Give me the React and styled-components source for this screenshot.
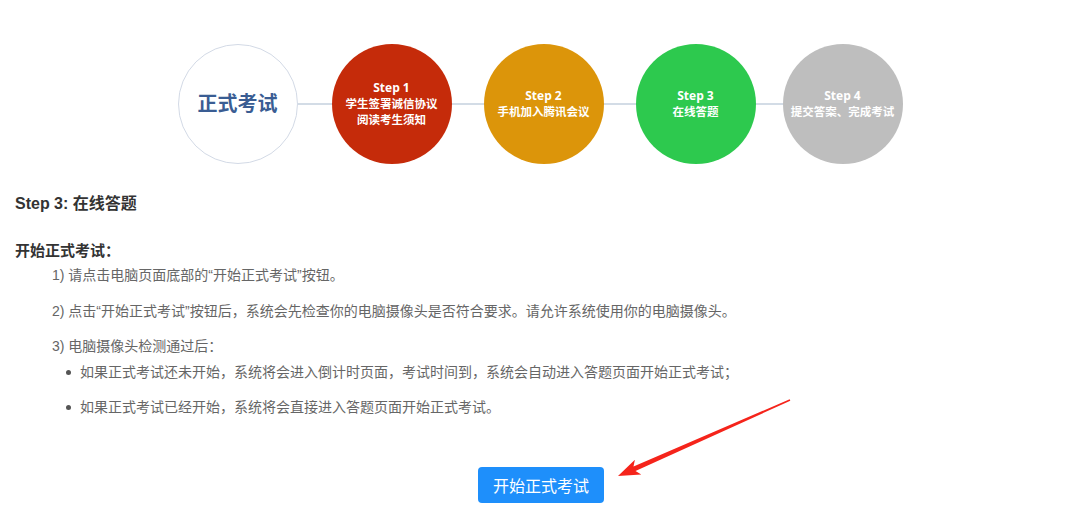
import React from 'react';
import styled, { createGlobalStyle } from 'styled-components';

const GlobalStyle = createGlobalStyle`
  html, body {
    margin: 0;
    padding: 0;
    background: #fff;
  }
  body {
    font-family: "Liberation Sans", "Noto Sans CJK SC", sans-serif;
    color: #333;
  }
`;

const Page = styled.div`
  position: relative;
  width: 1080px;
  height: 526px;
  overflow: hidden;
  padding: 44px 15px 0;
  box-sizing: border-box;
`;

const Steps = styled.div`
  display: flex;
  align-items: center;
  justify-content: center;
`;

const Circle = styled.div`
  width: 120px;
  height: 120px;
  border-radius: 50%;
  box-sizing: border-box;
  flex-shrink: 0;
  display: flex;
  flex-direction: column;
  align-items: center;
  justify-content: center;
  background: ${({ color }) => color || '#fff'};
  border: ${({ outline }) => (outline ? '1.5px solid #d3dae6' : 'none')};
  color: #fff;
  font-weight: bold;
  line-height: 16px;
  text-align: center;
`;

const StartLabel = styled.span`
  font-size: 20px;
  color: #3a5d93;
  font-weight: bold;
`;

const StepTitle = styled.span`
  font-family: "Open Sans", "Noto Sans CJK SC", sans-serif;
  font-size: 12px;
`;

const StepName = styled.span`
  font-size: 11.5px;
`;

const Connector = styled.div`
  width: ${({ w }) => w || 32}px;
  height: 2px;
  background: #d3dce6;
  flex-shrink: 0;
`;

const Heading = styled.h2`
  margin: 29px 0 0;
  font-size: 16px;
  line-height: 22px;
  font-weight: bold;
  color: #333;
`;

const SubHeading = styled.h3`
  margin: 25px 0 0;
  font-size: 15px;
  line-height: 22px;
  font-weight: bold;
  color: #333;
`;

const Item = styled.p`
  margin: ${({ gap }) => gap}px 0 0 37px;
  font-size: 14px;
  line-height: 22px;
  color: #666;
`;

const Bullets = styled.ul`
  margin: 4px 0 0 51px;
  padding: 0;
  list-style: none;
`;

const Bullet = styled.li`
  margin-top: ${({ gap }) => gap}px;
  font-size: 14px;
  line-height: 22px;
  color: #666;
  display: flex;
  align-items: center;
  gap: 9px;

  &::before {
    content: '';
    width: 5px;
    height: 5px;
    border-radius: 50%;
    background: #555;
    flex-shrink: 0;
  }
`;

const ButtonRow = styled.div`
  display: flex;
  justify-content: center;
  margin-top: 49px;
  padding-left: 2px;
`;

const StartButton = styled.button`
  height: 36px;
  padding: 0 15px;
  border: none;
  border-radius: 4px;
  background: #1e8ffb;
  color: #fff;
  font-family: "Liberation Sans", "Noto Sans CJK SC", sans-serif;
  font-size: 16px;
  cursor: pointer;
`;

const Overlay = styled.svg`
  position: absolute;
  left: 0;
  top: 0;
  pointer-events: none;
`;

const steps = [
  { color: '#c52b0a', title: 'Step 1', lines: ['学生签署诚信协议', '阅读考生须知'], gap: 34 },
  { color: '#dc950a', title: 'Step 2', lines: ['手机加入腾讯会议'], gap: 32 },
  { color: '#2dc94e', title: 'Step 3', lines: ['在线答题'], gap: 32 },
  { color: '#bebebe', title: 'Step 4', lines: ['提交答案、完成考试'], gap: 27 },
];

export default function App() {
  return (
    <>
      <GlobalStyle />
      <Page>
        <Steps>
          <Circle outline>
            <StartLabel>正式考试</StartLabel>
          </Circle>
          {steps.map((s) => (
            <React.Fragment key={s.title}>
              <Connector w={s.gap} />
              <Circle color={s.color}>
                <StepTitle>{s.title}</StepTitle>
                {s.lines.map((l) => (
                  <StepName key={l}>{l}</StepName>
                ))}
              </Circle>
            </React.Fragment>
          ))}
        </Steps>

        <Heading>Step 3: 在线答题</Heading>
        <SubHeading>开始正式考试：</SubHeading>
        <Item gap={2}>1) 请点击电脑页面底部的“开始正式考试”按钮。</Item>
        <Item gap={14}>2) 点击“开始正式考试”按钮后，系统会先检查你的电脑摄像头是否符合要求。请允许系统使用你的电脑摄像头。</Item>
        <Item gap={13}>3) 电脑摄像头检测通过后：</Item>
        <Bullets>
          <Bullet gap={0}>如果正式考试还未开始，系统将会进入倒计时页面，考试时间到，系统会自动进入答题页面开始正式考试；</Bullet>
          <Bullet gap={13}>如果正式考试已经开始，系统将会直接进入答题页面开始正式考试。</Bullet>
        </Bullets>

        <ButtonRow>
          <StartButton>开始正式考试</StartButton>
        </ButtonRow>

        <Overlay width="1080" height="526" viewBox="0 0 1080 526">
          <polygon
            fill="#f5241b"
            points="789.7,399.3 633.5,466.4 634.9,459.8 618,476 641.3,474.4 635.5,471 790.3,400.7"
          />
        </Overlay>
      </Page>
    </>
  );
}
